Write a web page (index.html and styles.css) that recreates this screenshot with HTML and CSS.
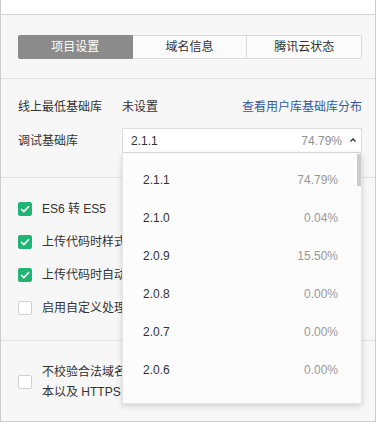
FILE: index.html
```html
<!DOCTYPE html>
<html lang="zh-CN">
<head>
<meta charset="utf-8">
<title>项目设置</title>
<link rel="stylesheet" href="styles.css">
</head>
<body>
<div class="frame">
  <div class="titlebar"></div>
  <div class="panel">
    <section class="sec sec-tabs">
      <div class="tabs">
        <div class="tab active">项目设置</div>
        <div class="tab">域名信息</div>
        <div class="tab">腾讯云状态</div>
      </div>
    </section>
    <section class="sec sec-lib">
      <div class="row">
        <span class="label">线上最低基础库</span>
        <span class="value">未设置</span>
        <a class="link">查看用户库基础库分布</a>
      </div>
      <div class="row row-select">
        <span class="label">调试基础库</span>
        <div class="select-wrap">
          <div class="select">
            <span class="sel-ver">2.1.1</span>
            <span class="sel-pct">74.79%</span>
            <svg class="caret" width="6" height="4" viewBox="0 0 6 4"><path d="M0.5 3.5 L3 1 L5.5 3.5" fill="none" stroke="#333" stroke-width="1.4"/></svg>
          </div>
          <div class="dropdown">
            <div class="thumb"></div>
            <ul class="options">
              <li class="opt"><span class="ver">2.1.1</span><span class="pct">74.79%</span></li>
              <li class="opt"><span class="ver">2.1.0</span><span class="pct">0.04%</span></li>
              <li class="opt"><span class="ver">2.0.9</span><span class="pct">15.50%</span></li>
              <li class="opt"><span class="ver">2.0.8</span><span class="pct">0.00%</span></li>
              <li class="opt"><span class="ver">2.0.7</span><span class="pct">0.00%</span></li>
              <li class="opt"><span class="ver">2.0.6</span><span class="pct">0.00%</span></li>
              <li class="opt"><span class="ver">2.0.5</span><span class="pct">0.00%</span></li>
            </ul>
          </div>
        </div>
      </div>
    </section>
    <section class="sec sec-checks">
      <label class="check"><span class="box on"><svg width="10" height="8" viewBox="0 0 10 8"><path d="M1 4 L3.8 6.6 L9 1.2" fill="none" stroke="#fff" stroke-width="1.6"/></svg></span><span>ES6 转 ES5</span></label>
      <label class="check"><span class="box on"><svg width="10" height="8" viewBox="0 0 10 8"><path d="M1 4 L3.8 6.6 L9 1.2" fill="none" stroke="#fff" stroke-width="1.6"/></svg></span><span>上传代码时样式自动补全</span></label>
      <label class="check"><span class="box on"><svg width="10" height="8" viewBox="0 0 10 8"><path d="M1 4 L3.8 6.6 L9 1.2" fill="none" stroke="#fff" stroke-width="1.6"/></svg></span><span>上传代码时自动压缩</span></label>
      <label class="check"><span class="box"></span><span>启用自定义处理命令</span></label>
    </section>
    <section class="sec sec-last">
      <label class="check check-multi"><span class="box"></span><span class="multi">不校验合法域名、web-view（业务域名）、TLS 版<br>本以及 HTTPS 证书</span></label>
    </section>
  </div>
</div>
</body>
</html>
```

FILE: styles.css
```css
* { box-sizing: border-box; }
html, body { margin: 0; padding: 0; background: #fff; }
body {
  font-family: "Liberation Sans", "Noto Sans CJK SC", sans-serif;
  font-size: 12px;
  color: #333;
}
.frame {
  width: 376px;
  height: 422px;
  border: 1px solid #cbcbcb;
  border-top: none;
  display: flex;
  flex-direction: column;
}
.titlebar {
  height: 15px;
  background: #fff;
  border-bottom: 1px solid #d2d2d2;
}
.panel {
  flex: 1;
  background: #f7f7f7;
  display: flex;
  flex-direction: column;
}
.sec {
  padding-left: 17px;
  padding-right: 13px;
  border-bottom: 1px solid #e2e2e2;
}
.sec-tabs { padding-top: 20px; padding-bottom: 19px; }
.tabs {
  display: grid;
  grid-template-columns: repeat(3, 1fr);
  height: 24px;
}
.tab {
  border: 1px solid #dadada;
  border-left: none;
  background: #fbfbfb;
  text-align: center;
  line-height: 22px;
  font-size: 12px;
  color: #333;
}
.tab:first-child { border-left: 1px solid #dadada; border-radius: 2px 0 0 2px; }
.tab:last-child { border-radius: 0 2px 2px 0; }
.tab.active { background: #8b8b8b; border-color: #8b8b8b; color: #fff; }

.sec-lib { padding-top: 20px; padding-bottom: 24px; }
.row { display: flex; align-items: center; height: 16px; line-height: 16px; }
.row-select { margin-top: 13px; height: 25px; }
.label { width: 104px; flex: none; }
.value { flex: 1; }
.link { color: #34599e; text-decoration: none; }
.select-wrap { flex: 1; position: relative; height: 25px; }
.select {
  height: 25px;
  background: #fff;
  border: 1px solid #dcdcdc;
  display: flex;
  align-items: center;
  padding: 1px 5px 0 8px;
}
.sel-ver { flex: 1; }
.sel-pct { color: #8f8f8f; }
.caret { margin-left: 8px; margin-top: -2px; }
.dropdown {
  position: absolute;
  top: 25px;
  left: 0;
  right: 0;
  height: 251px;
  background: #fcfcfc;
  border: 1px solid #e4e4e4;
  border-top: none;
  box-shadow: 0 2px 6px rgba(0, 0, 0, 0.16);
  overflow: hidden;
  z-index: 5;
}
.thumb {
  position: absolute;
  right: 0;
  top: 1px;
  width: 4px;
  height: 32px;
  background: #cdcdcd;
}
.options { list-style: none; margin: 0; padding: 8px 23px 0 20px; }
.opt {
  height: 38px;
  display: flex;
  align-items: center;
  justify-content: space-between;
}
.ver { color: #333; }
.pct { color: #999; }

.sec-checks {
  padding-top: 23px;
  padding-bottom: 24px;
  display: flex;
  flex-direction: column;
  gap: 17px;
}
.check {
  display: flex;
  align-items: center;
  gap: 10px;
  height: 16px;
  line-height: 16px;
  white-space: nowrap;
}
.box {
  width: 14px;
  height: 14px;
  flex: none;
  border: 1px solid #d0d0d0;
  background: #fff;
  border-radius: 2px;
  display: flex;
  align-items: center;
  justify-content: center;
}
.box.on { background: #20b475; border-color: #20b475; }
.sec-last { border-bottom: none; padding-top: 21px; }
.check-multi { height: 40px; }
.multi { line-height: 20px; }
```
